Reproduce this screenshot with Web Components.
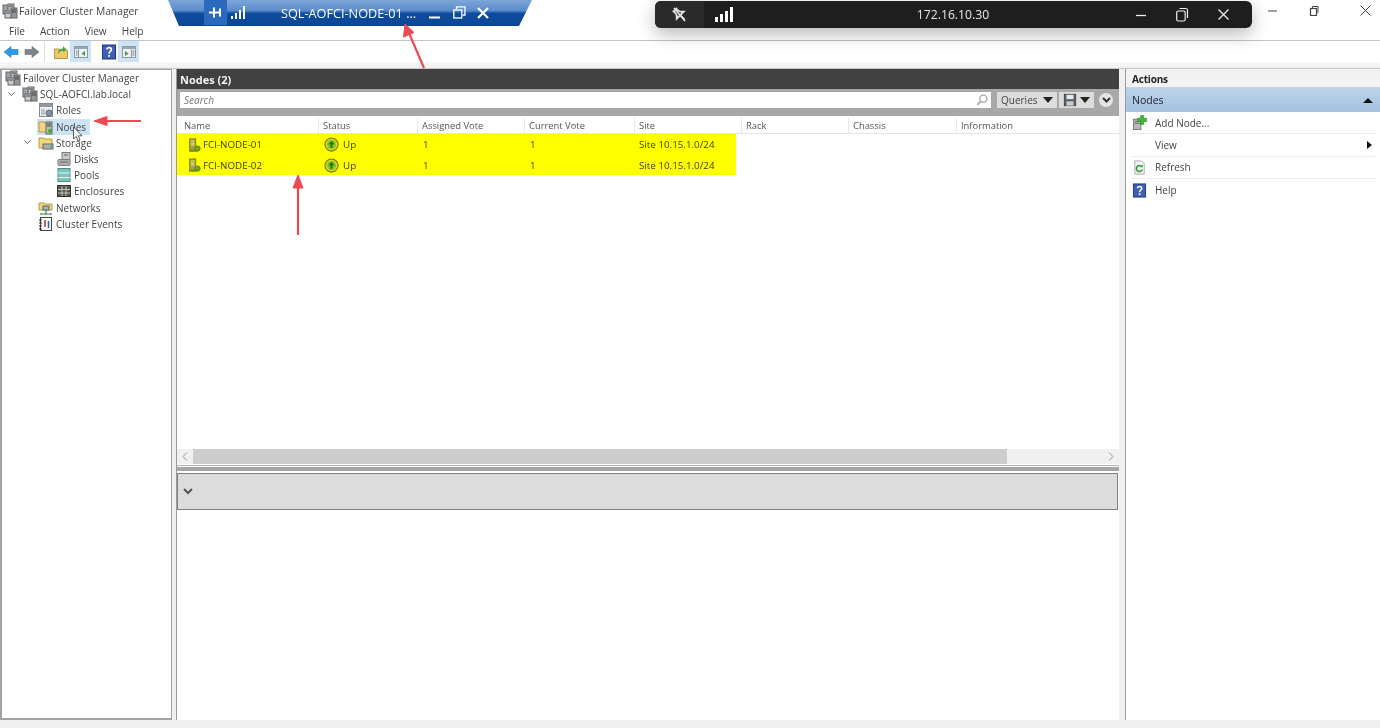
<!DOCTYPE html>
<html lang="en">
<head>
<meta charset="utf-8">
<title>Failover Cluster Manager</title>
<style>
  html, body { margin: 0; height: 100%; overflow: hidden; background: #f0f0f0; }
  body { font-family: "Open Sans", "Liberation Sans", sans-serif; font-size: 10.1px; color: #222; }
</style>
</head>
<body>
<app-shell></app-shell>

<script>
// icons, all drawn on a 16 x 16 box
const ICONS = {
    cluster: `<rect x="1" y="2" width="6" height="9" fill="#9aa3a8" stroke="#666"/><rect x="6" y="1" width="6" height="9" fill="#b9c0c4" stroke="#666"/><rect x="9" y="5" width="6" height="10" fill="#8e979c" stroke="#666"/><rect x="3" y="8" width="6" height="7" fill="#c6ccd0" stroke="#666"/><path d="M10 7h4M10 9h4M4 10h4M7 3h4" stroke="#444"/>`,
    roles: `<rect x="1.500" y="1.500" width="13" height="13" fill="#eef1f3" stroke="#888"/><rect x="2" y="2" width="12" height="3" fill="#8f9aa3"/><rect x="3" y="7" width="4" height="6" fill="#bcc5cb"/><circle cx="11" cy="11" r="3" fill="#7f97ad" stroke="#666"/>`,
    nodes: `<path d="M1 3h5l1 1h6v9H1z" fill="#f2d77e" stroke="#b89a45"/><rect x="8" y="3" width="6" height="12" fill="#b6c0a8" stroke="#666"/><path d="M9 5h4M9 7h4" stroke="#444"/><circle cx="12" cy="12" r="2" fill="#46a83c"/>`,
    storage: `<path d="M1 3h5l1 1h7v9H1z" fill="#f2d77e" stroke="#b89a45"/><rect x="5" y="9" width="10" height="5" fill="#aab2b7" stroke="#666"/><circle cx="13" cy="11.500" r="1" fill="#46a83c"/>`,
    disks: `<rect x="6" y="1.500" width="8" height="7" fill="#c4cace" stroke="#7d7d7d"/><rect x="2" y="8.500" width="12" height="6" rx="1" fill="#a9b0b5" stroke="#7d7d7d"/><path d="M8 4h4M4 11h8" stroke="#666"/>`,
    pools: `<rect x="2" y="1.500" width="12" height="13" fill="#7cc4be" stroke="#4a8f8b"/><path d="M2 6h12M2 10.500h12" stroke="#e6f5f4" stroke-width="1.200"/>`,
    enclosures: `<rect x="1.500" y="2.500" width="13" height="11" fill="#55594f" stroke="#333"/><path d="M6 3v10M10 3v10M2 6.500h12M2 10h12" stroke="#c2c5b8"/>`,
    networks: `<path d="M1 3h5l1 1h7v6H1z" fill="#f2d77e" stroke="#b89a45"/><rect x="5" y="6" width="6" height="4" fill="#9fb6c4" stroke="#567"/><path d="M8 10v3M3 14h10M3 13v2M8 13v2M13 13v2" stroke="#3d8f45" stroke-width="1.200"/>`,
    events: `<rect x="2.500" y="1.500" width="11" height="13" fill="#fff" stroke="#444"/><path d="M1 4h3M1 7h3M1 10h3M1 13h3" stroke="#333"/><path d="M7 4v7" stroke="#c0392b" stroke-width="1.600"/><path d="M10.500 5v7" stroke="#2e5fb3" stroke-width="1.600"/>`,
    server: `<rect x="3" y="1" width="7" height="14" fill="#a6a33a" stroke="#7f7d25"/><path d="M4.500 3.500h4M4.500 6h4M4.500 8h4" stroke="#f1f0b0"/><rect x="3" y="13" width="9" height="2.500" fill="#8d8b25"/><circle cx="12" cy="12" r="3" fill="#77a31e" stroke="#5b7d14"/>`,
    up: `<circle cx="8" cy="8" r="7" fill="#d9d92a" stroke="#77771a" stroke-width="1.200"/><circle cx="8" cy="8" r="4.800" fill="#8cc21f"/><path d="M8 4.200 4.800 7.800H7V11.500H9V7.800h2.200z" fill="#127a12"/>`,
    back: `<path d="M1 8 8 2.500V5.500H15V10.500H8V13.500z" fill="#2f9be8" stroke="#1b78bf" stroke-width=".6"/>`,
    forward: `<path d="M15 8 8 2.500V5.500H1V10.500H8V13.500z" fill="#7f8488" stroke="#65696c" stroke-width=".6"/>`,
    folderUp: `<path d="M1.500 5h5l1 1.500h7V14.500H1.500z" fill="#ecc96a" stroke="#b89a45"/><path d="M5 10C5 6 7 4.500 10 4.500V2l3.500 3.500L10 8V6.500C8 6.500 6.500 7.500 5 10z" fill="#45a83a"/>`,
    treeToggle: `<rect x="1.500" y="2.500" width="13" height="11" fill="#eef1f3" stroke="#8d9aa4"/><rect x="2" y="3" width="12" height="2" fill="#9aa6ae"/><path d="M5.500 5.500v8" stroke="#8d9aa4"/><path d="M3 7h1.500M3 9h1.500M3 11h1.500" stroke="#777"/><path d="M12 7v5L8.500 9.500z" fill="#36a13a"/>`,
    paneToggle: `<rect x="1.500" y="2.500" width="13" height="11" fill="#eef1f3" stroke="#8d9aa4"/><rect x="2" y="3" width="12" height="2" fill="#9aa6ae"/><path d="M10.500 5.500v8" stroke="#8d9aa4"/><path d="M11.500 7H13.500M11.500 9H13.500M11.500 11H13.500" stroke="#777"/><path d="M4 7v5L7.500 9.500z" fill="#36a13a"/>`,
    help: `<rect x="1.500" y="1" width="13" height="14" fill="#3d5fb5" stroke="#22397c"/><path d="M5.800 5.600C5.800 3 10.400 3 10.400 5.600 10.400 7.600 8.100 7.400 8.100 9.800" fill="none" stroke="#fff" stroke-width="1.700"/><rect x="7.200" y="11" width="1.800" height="1.800" fill="#fff"/>`,
    addNode: `<rect x="1.500" y="4.500" width="8" height="11" fill="#b5babd" stroke="#777"/><path d="M3 7h5M3 9h5" stroke="#666"/><path d="M9 0.500h3.500V3.500H15.500V7H12.500V10H9V7H6V3.500H9z" fill="#3fb53a" stroke="#26891f" stroke-width=".6"/>`,
    refresh: `<path d="M3 1h7l3 3v11H3z" fill="#fbfbfb" stroke="#a5a5a5"/><path d="M11 10a3.200 3.200 0 1 1-1-3.300" fill="none" stroke="#2f9e35" stroke-width="1.700"/><path d="M11.500 4.800v3h-3z" fill="#2f9e35"/>`,
    search: `<circle cx="9.500" cy="6.500" r="4" fill="none" stroke="#a8a8a8" stroke-width="1.500"/><path d="M6.500 9.500 2.500 13.500" stroke="#a8a8a8" stroke-width="2"/>`,
    saveDisk: `<rect x="1.500" y="1.500" width="13" height="13" fill="#5a6066" stroke="#3b3f44"/><rect x="4" y="2" width="8" height="5" fill="#e6e8ea"/><rect x="4" y="9.500" width="8" height="5" fill="#c9ccd0"/>`
};

function icon(name, size = 16) {
    return `<svg width="${size}" height="${size}" viewBox="0 0 16 16" aria-hidden="true" style="display:block;flex:none">${ICONS[name]}</svg>`;
}

function base(tag, css, html) {
    customElements.define(tag, class extends HTMLElement {
        constructor() {
            super();
            this.attachShadow({ mode: "open" });
        }
        connectedCallback() {
            this.shadowRoot.innerHTML = `<style>${css}</style>${typeof html === "function" ? html(this) : html}`;
        }
    });
}

base("win-titlebar", `
    :host { display: flex; align-items: center; height: 21px; background: #fff; font-size: 10.300px; color: #444; padding-left: 2px; }
    .name { margin-left: 1px; flex: 1; }
    .ctl { width: 1px; display: flex; justify-content: center; }
    .ctl svg { flex: none; }
    .min { margin-right: 40px; } .max { margin-right: 51px; } .close { margin-right: 14px; }
`, `
    ${icon("cluster")}
    <span class="name">Failover Cluster Manager</span>
    <div class="ctl min"><svg width="10" height="10"><path d="M0 5h9" stroke="#444"/></svg></div>
    <div class="ctl max"><svg width="10" height="10"><rect x="1.500" y="2.500" width="6" height="7" fill="none" stroke="#444" stroke-width="1.200"/><path d="M3.500 2V.5H9V7" fill="none" stroke="#444"/></svg></div>
    <div class="ctl close"><svg width="11" height="11"><path d="M.5.5l10 10M10.500.5l-10 10" stroke="#444"/></svg></div>
`);

base("menu-bar", `
    :host { display: flex; align-items: center; gap: 15px; height: 20px; padding: 1px 0 0 9px; box-sizing: border-box;
        background: #fff; border-bottom: 1px solid #c4c4c4; color: #444; }
`, `<span>File</span><span>Action</span><span>View</span><span>Help</span>`);

base("tool-bar", `
    :host { display: flex; align-items: center; height: 21px; padding-left: 3px; background: #fff; }
    .sep { width: 1px; height: 20px; background: #ddd; margin: 0 8px 0 4px; }
    .btn { display: flex; align-items: center; justify-content: center; height: 21px; }
    .on { background: #cfe3f6; width: 21px; }
`, `
    <div class="btn">${icon("back")}</div>
    <div class="btn" style="margin-left:5px">${icon("forward")}</div>
    <div class="sep"></div>
    <div class="btn">${icon("folderUp")}</div>
    <div class="btn on" style="margin-left:1px">${icon("treeToggle")}</div>
    <div class="btn" style="margin-left:10px">${icon("help")}</div>
    <div class="btn on" style="margin-left:1px">${icon("paneToggle")}</div>
`);

base("tree-item", `
    :host { display: flex; align-items: center; height: 16.200px; white-space: nowrap; color: #444; font-size: 10px; }
    .twist { width: 14px; margin-right: 4px; flex: none; display: flex; justify-content: center; }
    .row { display: flex; align-items: center; gap: 2px; height: 16px; padding-right: 4px; }
    .sel { background: #cde4f7; margin-left: -1px; padding-left: 1px; }
`, (el) => {
    const level = Number(el.getAttribute("level") || 0);
    const twist = el.hasAttribute("open")
        ? `<svg width="7" height="5"><path d="M.5.5 3.500 3.500 6.500.5" fill="none" stroke="#666"/></svg>` : "";
    return `<div style="width:${[3, 2, 18, 36][level]}px;flex:none"></div>
        ${level === 0 ? "" : `<div class="twist">${twist}</div>`}
        <div class="row ${el.hasAttribute("selected") ? "sel" : ""}">
            ${icon(el.getAttribute("icon"), 16)}<slot></slot>
        </div>`;
});

base("tree-pane", `
    :host { display: block; width: 172px; flex: none; box-sizing: border-box; background: #fff;
        border: 1px solid #a3a3a3; border-width: 1px 1px 2px 2px; }
`, `<slot></slot>`);

base("data-row", `
    :host { display: grid; grid-template-columns: 142px 99px 107px 110px 101px; width: 559px; height: 20.500px; box-sizing: border-box; padding-top: 1.500px;
        align-items: center; background: #ffff00; color: #3d3d00; font-size: 9.800px; }
    .cell { padding-left: 4px; display: flex; align-items: center; gap: 3px; }
    .first { padding-left: 10px; gap: 2px; }
    .vote { padding-left: 5px; }
`, (el) => `
    <div class="cell first">${icon("server", 14)}${el.getAttribute("name")}</div>
    <div class="cell" style="padding-left:5px;gap:4px">${icon("up", 15)}${el.getAttribute("status")}</div>
    <div class="cell vote">${el.getAttribute("assigned")}</div>
    <div class="cell vote">${el.getAttribute("current")}</div>
    <div class="cell">${el.getAttribute("site")}</div>
`);

base("nodes-pane", `
    :host { display: flex; flex-direction: column; flex: 1; min-width: 0; background: #fff; border-left: 1px solid #9a9a9a; }
    .title { height: 20px; box-sizing: border-box; padding: 1px 0 0 3px; background: #414141; color: #f2f2f2; font-weight: 700; display: flex; align-items: center; font-size: 11px; }
    .search { height: 27px; box-sizing: border-box; background: #a8a8a8; display: flex; align-items: flex-start; padding: 3px 0 0 3px; font-size: 10px; }
    .input { flex: none; width: 811px; height: 16px; box-sizing: border-box; background: #fff; color: #777; font-style: italic;
        display: flex; align-items: center; justify-content: space-between; padding: 0 2px 0 4px; }
    .drop { height: 16px; background: #dcdcdc; display: flex; align-items: center; justify-content: space-between; box-sizing: border-box; padding: 0 4px; color: #444; }
    .tri { width: 0; height: 0; border: 5px solid transparent; border-top: 6px solid #222; border-bottom: 0; }
    .round { width: 14px; height: 14px; border-radius: 50%; background: #e4e4e4; margin: 1px 0 0 5px; display: flex; align-items: center; justify-content: center; }
    .heads { display: grid; grid-template-columns: 142px 99px 107px 110px 107px 107px 108px 1fr; height: 17.500px; border-top: 1px solid #fff; border-bottom: 1px solid #e4e4e4; box-sizing: border-box; align-items: center; color: #555; font-size: 9.400px; padding-top: 1px; }
    .heads span { padding-left: 4px; line-height: 15px; border-right: 1px solid #e8e8e8; }
    .heads span:first-child { padding-left: 7px; }
    .heads span:last-child { border: 0; }
    .upper { height: 349px; display: flex; flex-direction: column; }
    .rows { flex: 1; }
    .hscroll { height: 15px; display: flex; background: #f0f0f0; margin-bottom: 1px; }
    .arrow { width: 16px; display: flex; align-items: center; justify-content: center; }
    .thumb { width: 814px; background: #cdcdcd; }
    .grow { flex: 1; }
    .split { height: 8px; box-sizing: border-box; background: #fff; border-top: 1px solid #b0b0b0; padding-top: 1px; }
    .split::after { content: ""; display: block; height: 4px; background: #a5a5a5; }
    .details { height: 37px; box-sizing: border-box; margin-right: 1px; background: #dcdcdc; border: 1px solid #7f7f7f; display: flex; align-items: center; padding-left: 5px; }
    .rest { flex: 1; background: #fff; }
`, `
    <div class="title">Nodes (2)</div>
    <div class="search">
        <div class="input"><span>Search</span>${icon("search", 14)}</div>
        <div class="drop" style="width:60px;margin-left:6px"><span>Queries</span><i class="tri"></i></div>
        <div class="drop" style="width:35px;margin-left:2px">${icon("saveDisk", 14)}<i class="tri"></i></div>
        <div class="round"><svg width="9" height="7"><path d="M1 1l3.500 3.500L8 1" fill="none" stroke="#333" stroke-width="2"/></svg></div>
    </div>
    <div class="upper">
        <div class="heads">
            <span>Name</span><span>Status</span><span>Assigned Vote</span><span>Current Vote</span><span>Site</span><span>Rack</span><span>Chassis</span><span>Information</span>
        </div>
        <div class="rows"><slot></slot></div>
        <div class="hscroll">
            <div class="arrow"><svg width="6" height="9"><path d="M5 .5 1 4.500 5 8.500" fill="none" stroke="#999"/></svg></div>
            <div class="thumb"></div>
            <div class="grow"></div>
            <div class="arrow"><svg width="6" height="9"><path d="M1 .5 5 4.500 1 8.500" fill="none" stroke="#999"/></svg></div>
        </div>
    </div>
    <div class="split"></div>
    <div class="details"><svg width="10" height="7"><path d="M1 1l4 4 4-4" fill="none" stroke="#555" stroke-width="2"/></svg></div>
    <div class="rest"></div>
`);

base("action-row", `
    :host { display: flex; align-items: center; height: 22.400px; margin: 0 5px 0 6px; box-sizing: border-box; border-bottom: 1px solid #ececec; color: #444; font-size: 10px; }
    :host(:last-child) { border-bottom: 0; }
    .ico { width: 23px; flex: none; }
    .txt { flex: 1; }
    .more { width: 0; height: 0; border: 4px solid transparent; border-left: 5px solid #111; border-right: 0; margin-right: 3px; }
`, (el) => `
    <div class="ico">${el.getAttribute("icon") ? icon(el.getAttribute("icon"), 15) : ""}</div>
    <div class="txt"><slot></slot></div>
    ${el.hasAttribute("more") ? `<i class="more"></i>` : ""}
`);

base("actions-pane", `
    :host { display: flex; flex-direction: column; width: 254px; flex: none; margin-left: 2px; background: #fff; border-left: 1px solid #9a9a9a; }
    .head { height: 19px; display: flex; align-items: center; padding: 2px 0 0 6px; font-weight: 700; font-size: 10px; letter-spacing: -.2px; background: #f2f2f2; border-bottom: 1px solid #d0d0d0; box-sizing: border-box; color: #222; }
    .group { height: 24px; display: flex; align-items: center; justify-content: space-between; padding: 0 7px 0 6px;
        background: linear-gradient(#bcd3ea, #a6c2df); color: #223; font-size: 10.500px; }
    .up { width: 0; height: 0; border: 5px solid transparent; border-bottom: 5px solid #111; border-top: 0; }
`, `
    <div class="head">Actions</div>
    <div class="group"><span>Nodes</span><i class="up"></i></div>
    <slot></slot>
`);

base("rdp-classic", `
    :host { display: block; position: absolute; left: 168px; top: 0; width: 364px; height: 26px; color: #fff;
        clip-path: polygon(0 0, 100% 0, 351px 100%, 11px 100%);
        background: linear-gradient(#7da6da 0, #5b8ccb 40%, #0d4c9e 52%, #0b4694 100%); font-size: 12.700px; }
    .bar { display: flex; align-items: center; height: 25px; padding-left: 36px; }
    .pin { width: 23px; height: 25px; background: #2a69bb; display: flex; align-items: center; justify-content: center; }
    .sig { margin-left: 4px; }
    .title { width: 137px; margin-left: 36px; white-space: nowrap; }
    .c { width: 24px; display: flex; justify-content: center; }
`, `
    <div class="bar">
        <div class="pin"><svg width="13" height="11"><path d="M0 5.500h4M4 1.500h2M4 9.500h2M5 1.500v8M11 1.500v8M5 5.500h6" stroke="#fff" stroke-width="2" fill="none"/></svg></div>
        <svg class="sig" width="14" height="13"><path d="M0 13v-3h2v3zM4 13V7h2v6zM8 13V4h2v9zM12 13V0h2v13z" fill="#fff"/></svg>
        <div class="title">SQL-AOFCI-NODE-01 ...</div>
        <div class="c" style="margin-left:5px"><svg width="12" height="13"><path d="M0 11.500h11" stroke="#fff" stroke-width="2"/></svg></div>
        <div class="c"><svg width="13" height="13"><rect x=".8" y="4" width="8" height="8" fill="none" stroke="#fff" stroke-width="1.300"/><path d="M3.500 3V.8H12V9H9.500" fill="none" stroke="#fff" stroke-width="1.300"/></svg></div>
        <div class="c"><svg width="12" height="12"><path d="M1 1l10 10M11 1 1 11" stroke="#fff" stroke-width="2.200"/></svg></div>
    </div>
`);

base("rdp-modern", `
    :host { display: flex; align-items: center; position: absolute; left: 655px; top: 1px; width: 597px; height: 27px; border-radius: 6px;
        background: #1e1e1e; color: #e8e8e8; font-size: 12.200px; box-shadow: 0 6px 18px rgba(0,0,0,.28); }
    .pin { width: 49px; height: 100%; background: #2a2a2a; border-radius: 6px 0 0 6px; display: flex; align-items: center; justify-content: center; }
    .sig { margin-left: 11px; flex: none; }
    .addr { width: 334px; text-align: center; margin-left: 51px; flex: none; }
    .c { flex: none; width: 41.500px; display: flex; justify-content: center; }
`, `
    <div class="pin"><svg width="17" height="17" fill="none" stroke="#e0e0e0" stroke-width="1.800"><g transform="rotate(-45 8.500 8.500)"><path d="M5.500 2h6M7 2.500 6 7 3.500 9.500h10L11 7l-1-4.500M8.500 9.500v6"/></g><path d="M3 2l11 13"/></svg></div>
    <svg class="sig" width="20" height="15"><path d="M0 15v-5h3v5zM5 15V7h3v8zM10 15V4h3v11zM15 15V0h3v15z" fill="#fff"/></svg>
    <div class="addr">172.16.10.30</div>
    <div class="c"><svg width="12" height="12"><path d="M1 6.500h10" stroke="#eee" stroke-width="1.300"/></svg></div>
    <div class="c"><svg width="14" height="15"><rect x="1.700" y="4" width="8.500" height="10" rx="1.500" fill="none" stroke="#eee" stroke-width="1.200"/><path d="M4.500 1.500H11A1.800 1.800 0 0 1 12.500 3V11" fill="none" stroke="#eee" stroke-width="1.200"/></svg></div>
    <div class="c"><svg width="13" height="13"><path d="M1.500 1.500l10 10M11.500 1.500l-10 10" stroke="#eee" stroke-width="1.300"/></svg></div>
`);

// red annotation arrows and the mouse pointer, they lie over the window
base("annot-layer", `
    :host { display: block; position: absolute; inset: 0; pointer-events: none; }
    svg { position: absolute; left: 0; top: 0; }
`, `
    <svg width="1380" height="728" fill="#ec4a50" stroke="#ec4a50">
        <path d="M424 68 409 33" stroke-width="2.200"/><path d="M405 24 403.500 37 414 32.500z"/>
        <path d="M141 121H106" stroke-width="2.200"/><path d="M94 121 107 116.500 107 125.500z"/>
        <path d="M298 235V188" stroke-width="2.200"/><path d="M298 175 293 188H303z"/>
        <path d="M73.500 127V139L76.300 136.500 78 141 80 140 78.300 135.800H82z" fill="#fff" stroke="#333" stroke-width=".8"/>
    </svg>
`);

base("app-shell", `
    :host { display: flex; flex-direction: column; position: relative; height: 100vh; overflow: hidden; background: #f0f0f0; filter: blur(.35px); }
    .top { background: linear-gradient(#fff 85%, #f0f0f0); padding-bottom: 6px; }
    .main { flex: 1; min-height: 0; display: flex; gap: 4px; background: #f0f0f0; border-top: 1px solid #c8c8c8; }
    .status { height: 8px; background: #f0f0f0; }
`, `
    <div class="top">
        <win-titlebar></win-titlebar>
        <menu-bar></menu-bar>
        <tool-bar></tool-bar>
    </div>
    <div class="main">
        <tree-pane>
            <tree-item level="0" icon="cluster">Failover Cluster Manager</tree-item>
            <tree-item level="1" icon="cluster" open>SQL-AOFCI.lab.local</tree-item>
            <tree-item level="2" icon="roles">Roles</tree-item>
            <tree-item level="2" icon="nodes" selected>Nodes</tree-item>
            <tree-item level="2" icon="storage" open>Storage</tree-item>
            <tree-item level="3" icon="disks">Disks</tree-item>
            <tree-item level="3" icon="pools">Pools</tree-item>
            <tree-item level="3" icon="enclosures">Enclosures</tree-item>
            <tree-item level="2" icon="networks">Networks</tree-item>
            <tree-item level="2" icon="events">Cluster Events</tree-item>
        </tree-pane>
        <nodes-pane>
            <data-row name="FCI-NODE-01" status="Up" assigned="1" current="1" site="Site 10.15.1.0/24"></data-row>
            <data-row name="FCI-NODE-02" status="Up" assigned="1" current="1" site="Site 10.15.1.0/24"></data-row>
        </nodes-pane>
        <actions-pane>
            <action-row icon="addNode">Add Node...</action-row>
            <action-row more>View</action-row>
            <action-row icon="refresh">Refresh</action-row>
            <action-row icon="help">Help</action-row>
        </actions-pane>
    </div>
    <div class="status"></div>
    <rdp-classic></rdp-classic>
    <rdp-modern></rdp-modern>
    <annot-layer></annot-layer>
`);
</script>
</body>
</html>
